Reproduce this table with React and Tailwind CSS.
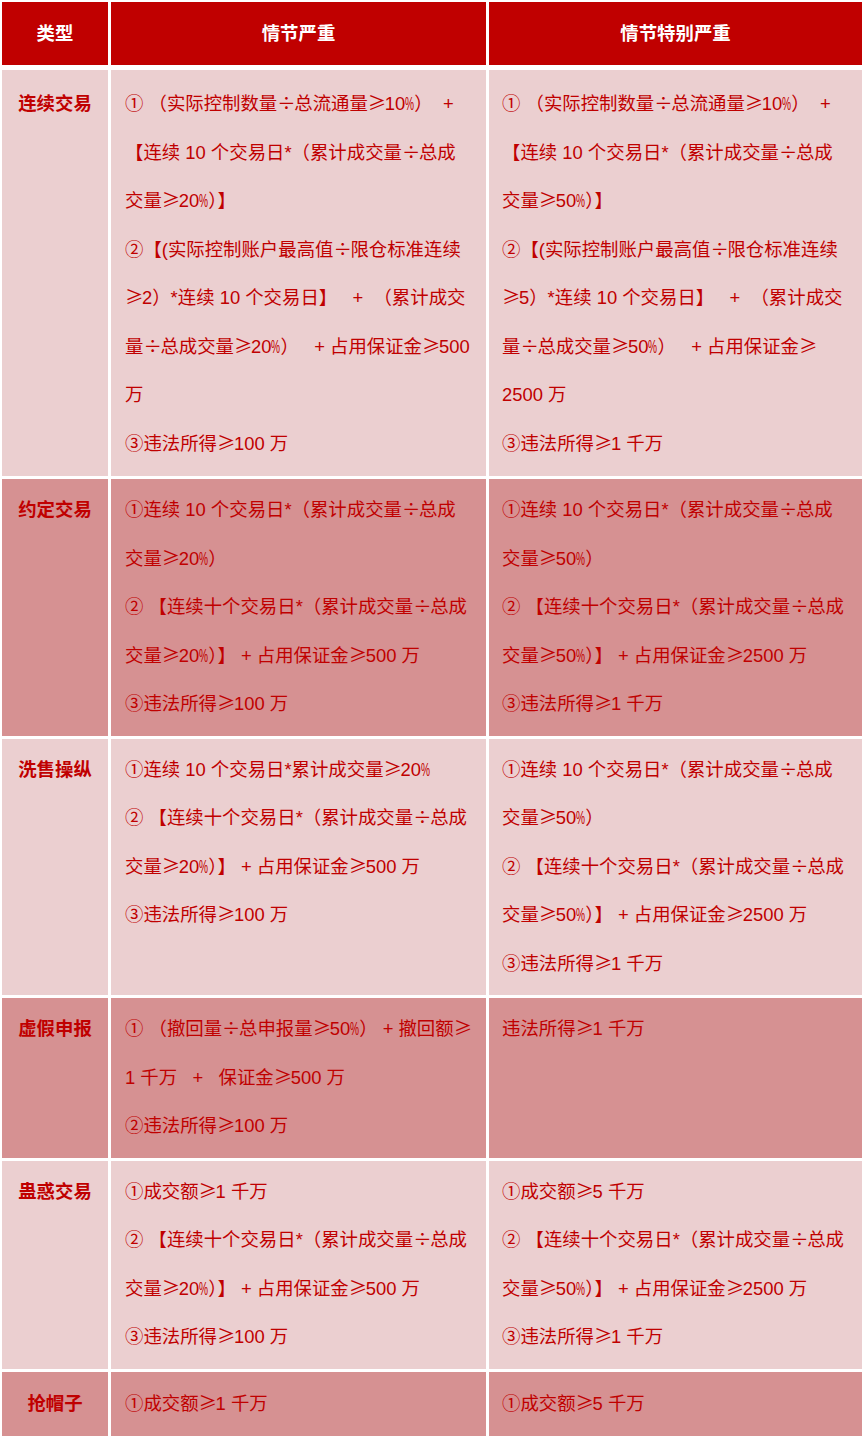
import React from 'react';

// the source font draws ÷ and ≥ full-width and % condensed
const Line = ({ text }) => {
  const parts = text.split(/(%|÷|≥)/);
  return (
    <div className="whitespace-pre">
      {parts.map((p, i) => {
        if (p === '%')
          return (
            <span key={i} className="inline-block w-[9px] scale-x-[0.55] origin-left">%</span>
          );
        if (p === '÷' || p === '≥')
          return (
            <span key={i} className="inline-block w-[17px] leading-none text-center font-['Noto_Sans_CJK_SC',sans-serif]">{p}</span>
          );
        return <React.Fragment key={i}>{p}</React.Fragment>;
      })}
    </div>
  );
};

const rows = [
  {
    type: '连续交易',
    tone: 'light',
    first: true,
    a: [
      '① （实际控制数量÷总流通量≥10%）  +',
      '【连续 10 个交易日*（累计成交量÷总成',
      '交量≥20%）】',
      '②【(实际控制账户最高值÷限仓标准连续',
      '≥2）*连续 10 个交易日】   +  （累计成交',
      '量÷总成交量≥20%）   + 占用保证金≥500',
      '万',
      '③违法所得≥100 万',
    ],
    b: [
      '① （实际控制数量÷总流通量≥10%）  +',
      '【连续 10 个交易日*（累计成交量÷总成',
      '交量≥50%）】',
      '②【(实际控制账户最高值÷限仓标准连续',
      '≥5）*连续 10 个交易日】   +  （累计成交',
      '量÷总成交量≥50%）   + 占用保证金≥',
      '2500 万',
      '③违法所得≥1 千万',
    ],
  },
  {
    type: '约定交易',
    tone: 'dark',
    a: [
      '①连续 10 个交易日*（累计成交量÷总成',
      '交量≥20%）',
      '② 【连续十个交易日*（累计成交量÷总成',
      '交量≥20%）】 + 占用保证金≥500 万',
      '③违法所得≥100 万',
    ],
    b: [
      '①连续 10 个交易日*（累计成交量÷总成',
      '交量≥50%）',
      '② 【连续十个交易日*（累计成交量÷总成',
      '交量≥50%）】 + 占用保证金≥2500 万',
      '③违法所得≥1 千万',
    ],
  },
  {
    type: '洗售操纵',
    tone: 'light',
    a: [
      '①连续 10 个交易日*累计成交量≥20%',
      '② 【连续十个交易日*（累计成交量÷总成',
      '交量≥20%）】 + 占用保证金≥500 万',
      '③违法所得≥100 万',
    ],
    b: [
      '①连续 10 个交易日*（累计成交量÷总成',
      '交量≥50%）',
      '② 【连续十个交易日*（累计成交量÷总成',
      '交量≥50%）】 + 占用保证金≥2500 万',
      '③违法所得≥1 千万',
    ],
  },
  {
    type: '虚假申报',
    tone: 'dark',
    a: [
      '① （撤回量÷总申报量≥50%） + 撤回额≥',
      '1 千万   +   保证金≥500 万',
      '②违法所得≥100 万',
    ],
    b: ['违法所得≥1 千万'],
  },
  {
    type: '蛊惑交易',
    tone: 'light',
    a: [
      '①成交额≥1 千万',
      '② 【连续十个交易日*（累计成交量÷总成',
      '交量≥20%）】 + 占用保证金≥500 万',
      '③违法所得≥100 万',
    ],
    b: [
      '①成交额≥5 千万',
      '② 【连续十个交易日*（累计成交量÷总成',
      '交量≥50%）】 + 占用保证金≥2500 万',
      '③违法所得≥1 千万',
    ],
  },
  {
    type: '抢帽子',
    tone: 'dark',
    last: true,
    a: ['①成交额≥1 千万'],
    b: ['①成交额≥5 千万'],
  },
];

export default function App() {
  return (
    <div className="w-[865px] bg-white p-[2px] font-['Liberation_Sans','Noto_Sans_CJK_SC',sans-serif] text-[18.4px] text-[#c00000]">
      {/* header */}
      <div className="grid grid-cols-[106px_375px_373px] gap-x-[3px] h-[63px]">
        <div className="bg-[#c00000] flex items-center justify-center font-bold text-white">类型</div>
        <div className="bg-[#c00000] flex items-center justify-center font-bold text-white">情节严重</div>
        <div className="bg-[#c00000] flex items-center justify-center font-bold text-white">情节特别严重</div>
      </div>

      <div className="mt-[5px] flex flex-col gap-y-[3px]">
        {rows.map((r) => {
          const bg = r.tone === 'light' ? 'bg-[#ebcfd0]' : 'bg-[#d69192]';
          const pad = r.first ? 'pt-[10px] pb-[8px]' : r.last ? 'pt-[8px] pb-[8px]' : 'pt-[7px] pb-[7px]';
          return (
            <div key={r.type} className="grid grid-cols-[106px_375px_373px] gap-x-[3px] leading-[48.5px]">
              <div className={`${bg} ${pad} text-center font-bold`}>{r.type}</div>
              <div className={`${bg} ${pad} pl-[14px] pr-[4px] overflow-hidden`}>
                {r.a.map((t, i) => (
                  <Line key={i} text={t} />
                ))}
              </div>
              <div className={`${bg} ${pad} pl-[13px] pr-[4px] overflow-hidden`}>
                {r.b.map((t, i) => (
                  <Line key={i} text={t} />
                ))}
              </div>
            </div>
          );
        })}
      </div>
    </div>
  );
}
